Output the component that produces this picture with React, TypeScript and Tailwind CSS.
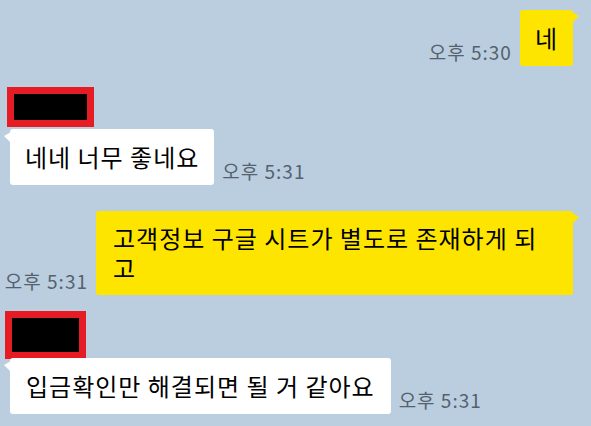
const font = "font-['Noto_Sans_CJK_KR','Noto_Sans',sans-serif]"

function Time({ children }: { children: string }) {
  return (
    <span className="text-[19px] leading-[22px] tracking-[1px] text-[#55616d] whitespace-nowrap mb-[3px]">
      {children}
    </span>
  )
}

function MyBubble({ children, className = '' }: { children: React.ReactNode; className?: string }) {
  return (
    <div className={`relative bg-[#fee500] rounded-[3px] text-[24px] leading-[30px] tracking-[1px] text-black ${className}`}>
      {children}
      <svg className="absolute -right-[6px] top-[2px]" width="7" height="12" viewBox="0 0 7 12">
        <polygon points="0,0 7,4 0,11" fill="#fee500" />
      </svg>
    </div>
  )
}

function OtherBubble({ children, className = '' }: { children: React.ReactNode; className?: string }) {
  return (
    <div className={`relative bg-white rounded-[3px] text-[24px] leading-[30px] tracking-[1px] text-black ${className}`}>
      {children}
      <svg className="absolute -left-[6px] top-[3px]" width="7" height="12" viewBox="0 0 7 12">
        <polygon points="7,0 0,4 7,11" fill="#ffffff" />
      </svg>
    </div>
  )
}

function Redacted({ className = '' }: { className?: string }) {
  return <div className={`bg-black border-[7px] border-[#e51c23] ${className}`} />
}

export default function App() {
  return (
    <div className={`w-[591px] h-[426px] bg-[#bacee0] overflow-hidden ${font}`}>
      <div className="flex flex-col">
        <div className="flex justify-end items-end gap-[8px] pt-[10px] pr-[18px]">
          <Time>오후 5:30</Time>
          <MyBubble className="px-[15px] py-[13px]">네</MyBubble>
        </div>

        <Redacted className="mt-[21px] ml-[7px] w-[87px] h-[40px]" />

        <div className="flex items-end gap-[8px] mt-[2px] ml-[10px]">
          <OtherBubble className="px-[15px] py-[13px]">네네 너무 좋네요</OtherBubble>
          <Time>오후 5:31</Time>
        </div>

        <div className="flex justify-end items-end gap-[8px] mt-[26px] pr-[18px]">
          <Time>오후 5:31</Time>
          <MyBubble className="w-[477px] pl-[17px] pr-[10px] py-[12px]">
            고객정보 구글 시트가 별도로 존재하게 되<br />고
          </MyBubble>
        </div>

        <Redacted className="mt-[16px] ml-[5px] w-[81px] h-[48px]" />

        <div className="flex items-end gap-[8px] -mt-[1px] ml-[10px]">
          <OtherBubble className="px-[16px] py-[13px]">입금확인만 해결되면 될 거 같아요</OtherBubble>
          <Time>오후 5:31</Time>
        </div>
      </div>
    </div>
  )
}
